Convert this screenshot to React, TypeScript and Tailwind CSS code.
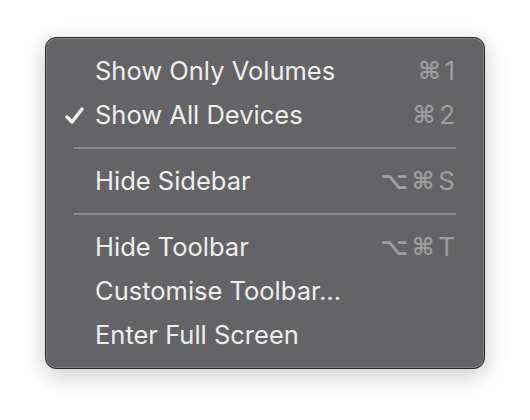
import type { ReactNode } from 'react';

type Item =
  | { kind: 'item'; label: string; checked?: boolean; keys?: string[] }
  | { kind: 'sep' };

const items: Item[] = [
  { kind: 'item', label: 'Show Only Volumes', keys: ['⌘', '1'] },
  { kind: 'item', label: 'Show All Devices', checked: true, keys: ['⌘', '2'] },
  { kind: 'sep' },
  { kind: 'item', label: 'Hide Sidebar', keys: ['⌥', '⌘', 'S'] },
  { kind: 'sep' },
  { kind: 'item', label: 'Hide Toolbar', keys: ['⌥', '⌘', 'T'] },
  { kind: 'item', label: 'Customise Toolbar…' },
  { kind: 'item', label: 'Enter Full Screen' },
];

function Check() {
  return (
    <svg width="19" height="17" viewBox="0 0 19 17" className="text-[#f2f2f2]">
      <path d="M2 10 L7 15 L17 2" fill="none" stroke="currentColor" strokeWidth="3.4" strokeLinecap="round" strokeLinejoin="round" />
    </svg>
  );
}

function Shortcut({ keys }: { keys: string[] }) {
  return (
    <span className="flex items-center gap-[4px] text-[#9d9d9f]">
      {keys.map((k, i) => (
        <span
          key={i}
          className={k === '⌘' || k === '⌥' ? "font-['DejaVu_Sans'] text-[24px] font-bold" : 'text-[26px]'}
        >
          {k}
        </span>
      ))}
    </span>
  );
}

function Row({ children }: { children: ReactNode }) {
  return <div className="flex h-[44px] items-center">{children}</div>;
}

export default function App() {
  return (
    <div className="h-[420px] w-[530px] bg-white pl-[45px] pt-[37px] font-['Inter',sans-serif]">
      <div className="w-[440px] rounded-[11px] border border-[#2a2a2a] bg-[#646466] py-[11px] shadow-[0_6px_24px_rgba(0,0,0,0.22),inset_0_0_0_1px_rgba(255,255,255,0.18)]">
        {items.map((it, i) =>
          it.kind === 'sep' ? (
            <div key={i} className="flex h-[22px] items-center px-[28px]">
              <div className="h-[2px] w-full bg-[#8a8a8c]" />
            </div>
          ) : (
            <Row key={i}>
              <div className="flex w-[49px] justify-end pr-[11px]">{it.checked && <Check />}</div>
              <span className="flex-1 text-[25.5px] font-normal leading-none text-[#eeeeee]">
                {it.label}
              </span>
              {it.keys && (
                <span className="pr-[29px] leading-none">
                  <Shortcut keys={it.keys} />
                </span>
              )}
            </Row>
          )
        )}
      </div>
    </div>
  );
}
